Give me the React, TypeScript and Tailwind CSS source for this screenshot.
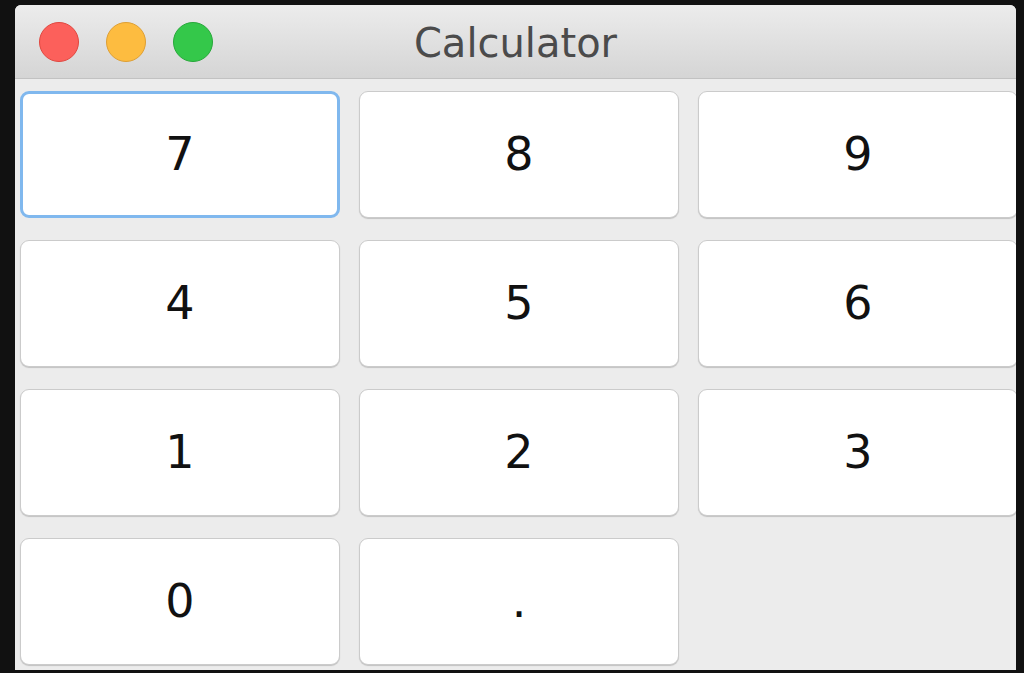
import React from 'react';

const keys = ['7', '8', '9', '4', '5', '6', '1', '2', '3', '0', '.'];

export default function App() {
  return (
    <div className="w-[1024px] h-[673px] bg-[#111111] overflow-hidden pl-[15px] pt-[5px]">
      <div className="w-[1001px] h-[665px] rounded-t-[6px] overflow-hidden bg-[#ececec] flex flex-col">
        {/* Title bar */}
        <div className="h-[74px] shrink-0 grid grid-cols-[1fr_auto_1fr] items-center bg-gradient-to-b from-[#ececec] to-[#d5d5d5] border-b border-[#c2c2c2]">
          <div className="flex items-center gap-[27px] pl-[24px]">
            <span className="w-[40px] h-[40px] rounded-full bg-[#fc605b] border border-[#e0473f]" />
            <span className="w-[40px] h-[40px] rounded-full bg-[#fdbc40] border border-[#de9f34]" />
            <span className="w-[40px] h-[40px] rounded-full bg-[#34c84a] border border-[#27a83a]" />
          </div>
          <div className="text-[40px] leading-none text-[#4b4b4b] font-['DejaVu_Sans',sans-serif] pt-[2px]">
            Calculator
          </div>
          <div />
        </div>

        {/* Keypad */}
        <div className="pl-[5px] pt-[12px]">
          <div className="grid grid-cols-[320px_320px_320px] gap-x-[19px] gap-y-[22px] w-[1010px]">
            {keys.map((k, i) => (
              <button
                key={k}
                className={
                  i === 0
                    ? 'h-[127px] bg-white rounded-[9px] border-[3px] border-[#80b8ee] flex items-center justify-center text-[46px] text-[#111] font-["DejaVu_Sans",sans-serif]'
                    : 'h-[127px] bg-white rounded-[9px] border border-[#cbcbcb] shadow-[0_1px_1px_rgba(0,0,0,0.18)] flex items-center justify-center text-[46px] text-[#111] font-["DejaVu_Sans",sans-serif]'
                }
              >
                {k}
              </button>
            ))}
          </div>
        </div>
      </div>
    </div>
  );
}
